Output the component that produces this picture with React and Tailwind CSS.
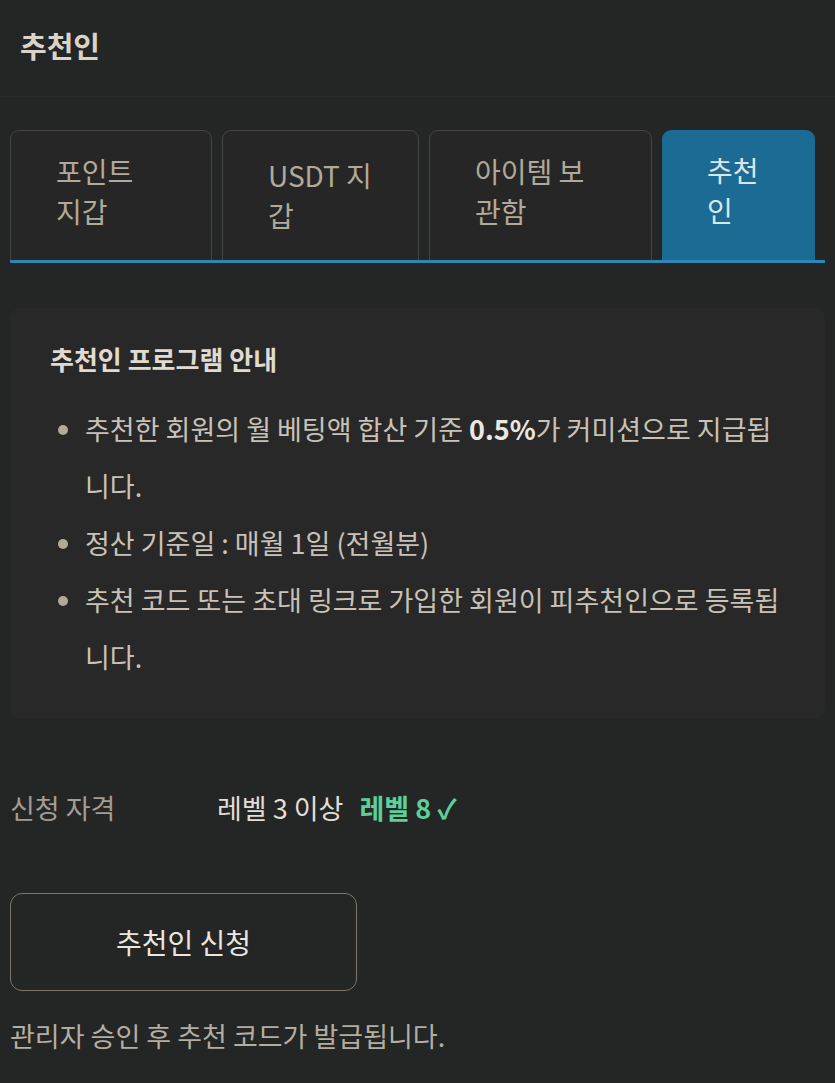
import React, { useState } from "react";

// 탭 라벨 폭은 줄바꿈 위치를 맞추기 위해 고정
const tabs = [
  { id: "point", label: "포인트 지갑", w: "w-[202px]", tw: "w-[100px]" },
  { id: "usdt", label: "USDT 지갑", w: "w-[197px]", tw: "w-[110px] pt-[8px]" },
  { id: "items", label: "아이템 보관함", w: "w-[223px]", tw: "w-[124px]" },
  { id: "referral", label: "추천인", w: "w-[153px]", tw: "w-[62px]" },
];

export default function App() {
  const [tab, setTab] = useState("referral");

  return (
    <div
      className="min-h-[1083px] w-[835px] bg-[#242525] text-[#c9c3b9]"
      style={{ fontFamily: '"Noto Sans CJK KR", "Noto Sans", sans-serif' }}
    >
      <header className="flex h-[97px] items-center border-b border-[#2a2a27] px-5 pb-1">
        <h1 className="text-[29px] font-bold text-[#d9d3c9]">추천인</h1>
      </header>

      <div className="px-[10px]">
        {/* 지갑 탭 */}
        <div className="mt-[33px] flex gap-[10px] border-b-[3px] border-[#2c87b6]">
          {tabs.map((t) => {
            const active = t.id === tab;
            return (
              <button
                key={t.id}
                type="button"
                onClick={() => setTab(t.id)}
                className={`${t.w} flex h-[130px] items-center rounded-t-[9px] pb-[10px] pl-[45px] text-left text-[28px] leading-[40px] ${
                  active
                    ? "bg-[#1b6b94] text-[#dce6ea]"
                    : "border border-b-0 border-[#444442] bg-[#262626] text-[#b1a999]"
                }`}
              >
                <span className={t.tw}>{t.label}</span>
              </button>
            );
          })}
        </div>

        {/* 프로그램 안내 */}
        <section className="mt-[45px] rounded-[10px] bg-[#282828] px-10 pt-[33px] pb-[34px]">
          <h2 className="text-[26px] font-bold leading-[36px] text-[#e0dbd2]">
            추천인 프로그램 안내
          </h2>
          <ul className="mt-[23px] list-disc pl-[35px] text-[27px] leading-[57px] text-[#c8c2b8] marker:text-[#b1a999]">
            <li>
              추천한 회원의 월 베팅액 합산 기준{" "}
              <b className="font-bold text-[#ece8e0]">0.5%</b>가 커미션으로
              지급됩니다.
            </li>
            <li>정산 기준일 : 매월 1일 (전월분)</li>
            <li>
              추천 코드 또는 초대 링크로 가입한 회원이 피추천인으로 등록됩니다.
            </li>
          </ul>
        </section>

        {/* 신청 자격 */}
        <div className="mt-[71px] flex items-center text-[27px] leading-[36px]">
          <span className="w-[207px] text-[#a39d93]">신청 자격</span>
          <span className="text-[#e2ded6]">레벨 3 이상</span>
          <span className="ml-4 font-bold text-[#5ccf9b]">레벨 8 ✓</span>
        </div>

        <button
          type="button"
          className="mt-[67px] flex h-[98px] w-[347px] items-center justify-center rounded-[12px] border-[1.5px] border-[#7d766b] text-[28px] font-normal text-[#ebe7df]"
        >
          추천인 신청
        </button>

        <p className="mt-[27px] text-[27px] leading-[36px] text-[#b3ada2]">
          관리자 승인 후 추천 코드가 발급됩니다.
        </p>
      </div>
    </div>
  );
}
